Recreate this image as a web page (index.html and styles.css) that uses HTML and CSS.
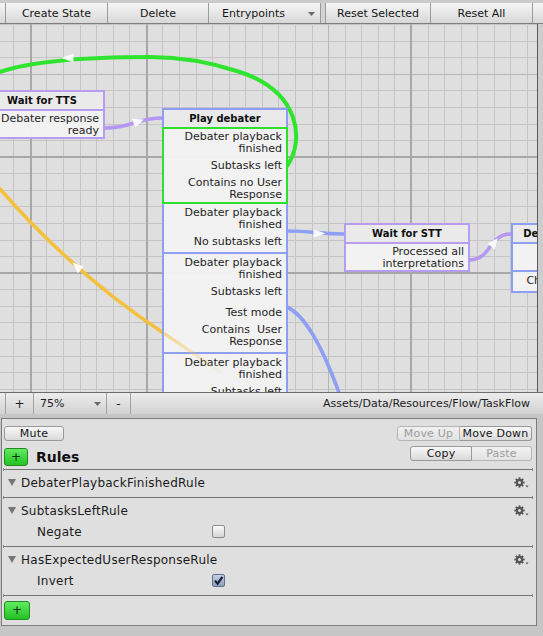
FILE: index.html
```html
<!DOCTYPE html>
<html>
<head>
<meta charset="utf-8">
<title>Flow Editor</title>
<link rel="stylesheet" href="styles.css">
</head>
<body>
<div class="window">
  <div class="toolbar">
    <div class="tb-item tb-lead"></div>
    <div class="tb-item tb-create">Create State</div>
    <div class="tb-item tb-delete">Delete</div>
    <div class="tb-item tb-drop"><span>Entrypoints</span><svg class="drop-arrow" width="7" height="4" viewBox="0 0 7 4"><polygon points="0,0 7,0 3.5,4" fill="#6a6a6a"/></svg></div>
    <div class="tb-item tb-gap"></div>
    <div class="tb-item tb-resetsel">Reset Selected</div>
    <div class="tb-item tb-resetall">Reset All</div>
    <div class="tb-item tb-fill"></div>
  </div>

  <div class="main">
    <div class="canvas">
      <svg class="layer" width="537" height="368" viewBox="0 0 537 368">
        <path class="g-minor" d="M13.5 0V368M30.5 0V368M46.5 0V368M63.5 0V368M80.5 0V368M96.5 0V368M113.5 0V368M129.5 0V368M146.5 0V368M162.5 0V368M179.5 0V368M196.5 0V368M212.5 0V368M229.5 0V368M245.5 0V368M262.5 0V368M278.5 0V368M295.5 0V368M312.5 0V368M328.5 0V368M345.5 0V368M361.5 0V368M378.5 0V368M394.5 0V368M411.5 0V368M428.5 0V368M444.5 0V368M461.5 0V368M477.5 0V368M494.5 0V368M510.5 0V368M527.5 0V368M0 0.5H537M0 17.5H537M0 33.5H537M0 50.5H537M0 66.5H537M0 83.5H537M0 100.5H537M0 116.5H537M0 133.5H537M0 149.5H537M0 166.5H537M0 182.5H537M0 199.5H537M0 216.5H537M0 232.5H537M0 249.5H537M0 265.5H537M0 282.5H537M0 298.5H537M0 315.5H537M0 332.5H537M0 348.5H537M0 365.5H537"/>
        <path class="g-mid" d="M328.5 0V368M0 50.5H537"/>
        <path class="g-major" d="M31 0V368M147 0V368M411 0V368M0 133H537M0 249H537"/>
      </svg>

      <svg class="layer" width="537" height="368" viewBox="0 24 537 368">
        <g fill="none" stroke-width="3.6" stroke-linecap="round">
          <path d="M-4,184.4 L0,189 Q75,275 165,334" stroke="#f4c13f"/>
          <path d="M287,166 C305,140 300,92 240,72 C210,62 180,57 150,57 C100,57 30,60 -6,74" stroke="#2fe42f" stroke-width="4"/>
          <path d="M105,128 C134,128 134,118 163,118" stroke="#b596f3"/>
          <path d="M287,231 C316,231 316,234 345,234" stroke="#8ea0f3"/>
          <path d="M469,260 C492,260 488,234 511,234" stroke="#b596f3"/>
          <path d="M287,307 C305,315 325,350 345,410" stroke="#8ea0f3"/>
        </g>
        <g class="arrows">
          <polygon points="61.5,58 73.5,53.5 73.5,62.5"/>
          <polygon points="144,119.5 132.1,118.9 135.1,127.4"/>
          <polygon points="325.5,233.5 313.5,229.2 313.5,237.6"/>
          <polygon points="498,238 494.5,249.4 487.5,243.6"/>
          <polygon points="72.5,262.5 83.8,266.5 77.8,273.2"/>
        </g>
      </svg>

      <div class="node node-tts purple">
        <div class="node-head">Wait for TTS</div>
        <div class="sec tight"><div class="cond">Debater response<br>ready</div></div>
      </div>

      <div class="node node-play">
        <div class="node-head">Play debater</div>
        <div class="sec active">
          <div class="cond">Debater playback<br>finished</div>
          <div class="cond">Subtasks left</div>
          <div class="cond">Contains no User<br>Response</div>
        </div>
        <div class="sec">
          <div class="cond">Debater playback<br>finished</div>
          <div class="cond">No subtasks left</div>
        </div>
        <div class="sec">
          <div class="cond">Debater playback<br>finished</div>
          <div class="cond">Subtasks left</div>
          <div class="cond gap-lg">Test mode</div>
          <div class="cond">Contains&nbsp; User<br>Response</div>
        </div>
        <div class="sec">
          <div class="cond">Debater playback<br>finished</div>
          <div class="cond">Subtasks left</div>
        </div>
      </div>

      <div class="node node-stt purple">
        <div class="node-head">Wait for STT</div>
        <div class="sec tight"><div class="cond">Processed all<br>interpretations</div></div>
      </div>

      <div class="node node-right">
        <div class="node-head">Debater follow-up</div>
        <div class="sec tight"><div class="cond">Answer matches<br>expected</div></div>
        <div class="sec"><div class="cond">Check user answer</div></div>
      </div>

      <svg class="layer" width="537" height="368" viewBox="0 24 537 368">
        <defs>
          <linearGradient id="fade" gradientUnits="userSpaceOnUse" x1="163" y1="333" x2="228" y2="377">
            <stop offset="0" stop-color="#f4c13f" stop-opacity="0.55"/>
            <stop offset="1" stop-color="#f4c13f" stop-opacity="0"/>
          </linearGradient>
        </defs>
        <path d="M164,333.3 Q195,354 228,377" fill="none" stroke="url(#fade)" stroke-width="3.4"/>
      </svg>
    </div>
    <div class="gutter"></div>
  </div>

  <div class="statusbar">
    <div class="sb-item sb-lead"></div>
    <div class="sb-item sb-plus">+</div>
    <div class="sb-item sb-zoom"><span>75%</span><svg width="7" height="4" viewBox="0 0 7 4"><polygon points="0,0 7,0 3.5,4" fill="#6a6a6a"/></svg></div>
    <div class="sb-item sb-minus">-</div>
    <div class="sb-item sb-path">Assets/Data/Resources/Flow/TaskFlow</div>
  </div>

  <div class="panel">
    <div class="prow">
      <div class="btn btn-mute">Mute</div>
      <div class="group">
        <div class="btn off w-up">Move Up</div>
        <div class="btn w-down">Move Down</div>
      </div>
    </div>
    <div class="prow prow2">
      <div class="rules-title">
        <div class="btn-add">+</div>
        <span class="rules-label">Rules</span>
      </div>
      <div class="group">
        <div class="btn w-copy">Copy</div>
        <div class="btn off w-paste">Paste</div>
      </div>
    </div>

    <div class="sep sep-first"></div>
    <div class="rule">
      <div class="rule-head">
        <svg class="tri" width="8" height="7" viewBox="0 0 8 7"><polygon points="0,0 8,0 4,7" fill="#767676"/></svg>
        <span>DebaterPlaybackFinishedRule</span>
        <svg class="gear" width="15" height="12" viewBox="0 0 15 12"><g fill="#575757"><circle cx="5.5" cy="5.5" r="3.7"/><rect x="4.6" y="0.3" width="1.8" height="10.4"/><rect x="4.6" y="0.3" width="1.8" height="10.4" transform="rotate(45 5.5 5.5)"/><rect x="4.6" y="0.3" width="1.8" height="10.4" transform="rotate(90 5.5 5.5)"/><rect x="4.6" y="0.3" width="1.8" height="10.4" transform="rotate(135 5.5 5.5)"/><polygon points="11.5,8.5 14.5,8.5 13,10.5"/></g><circle cx="5.5" cy="5.5" r="1.5" fill="#dfdfdf"/></svg>
      </div>
    </div>
    <div class="sep"></div>
    <div class="rule">
      <div class="rule-head">
        <svg class="tri" width="8" height="7" viewBox="0 0 8 7"><polygon points="0,0 8,0 4,7" fill="#767676"/></svg>
        <span>SubtasksLeftRule</span>
        <svg class="gear" width="15" height="12" viewBox="0 0 15 12"><g fill="#575757"><circle cx="5.5" cy="5.5" r="3.7"/><rect x="4.6" y="0.3" width="1.8" height="10.4"/><rect x="4.6" y="0.3" width="1.8" height="10.4" transform="rotate(45 5.5 5.5)"/><rect x="4.6" y="0.3" width="1.8" height="10.4" transform="rotate(90 5.5 5.5)"/><rect x="4.6" y="0.3" width="1.8" height="10.4" transform="rotate(135 5.5 5.5)"/><polygon points="11.5,8.5 14.5,8.5 13,10.5"/></g><circle cx="5.5" cy="5.5" r="1.5" fill="#dfdfdf"/></svg>
      </div>
      <div class="field">
        <span class="field-label">Negate</span>
        <div class="check"></div>
      </div>
    </div>
    <div class="sep"></div>
    <div class="rule">
      <div class="rule-head">
        <svg class="tri" width="8" height="7" viewBox="0 0 8 7"><polygon points="0,0 8,0 4,7" fill="#767676"/></svg>
        <span>HasExpectedUserResponseRule</span>
        <svg class="gear" width="15" height="12" viewBox="0 0 15 12"><g fill="#575757"><circle cx="5.5" cy="5.5" r="3.7"/><rect x="4.6" y="0.3" width="1.8" height="10.4"/><rect x="4.6" y="0.3" width="1.8" height="10.4" transform="rotate(45 5.5 5.5)"/><rect x="4.6" y="0.3" width="1.8" height="10.4" transform="rotate(90 5.5 5.5)"/><rect x="4.6" y="0.3" width="1.8" height="10.4" transform="rotate(135 5.5 5.5)"/><polygon points="11.5,8.5 14.5,8.5 13,10.5"/></g><circle cx="5.5" cy="5.5" r="1.5" fill="#dfdfdf"/></svg>
      </div>
      <div class="field">
        <span class="field-label">Invert</span>
        <div class="check on"><svg width="11" height="11" viewBox="0 0 11 11"><path d="M2 5.6 L4.6 8.6 L9.4 1.8" fill="none" stroke="#15203a" stroke-width="2.2"/></svg></div>
      </div>
    </div>
    <div class="sep"></div>
    <div class="btn-add bottom">+</div>
  </div>
</div>
</body>
</html>
```

FILE: styles.css
```css
* { box-sizing: border-box; }
html, body { margin: 0; padding: 0; }
body {
  width: 543px;
  height: 636px;
  overflow: hidden;
  background: #c6c6c6;
  font-family: "DejaVu Sans", "Liberation Sans", sans-serif;
  color: #1a1a1a;
}
.window { display: flex; flex-direction: column; width: 543px; height: 636px; }

/* top toolbar */
.toolbar {
  display: flex;
  flex: none;
  height: 24px;
  padding-top: 3px;
  background: #cbcbcb;
  border-bottom: 1px solid #7e7e7e;
}
.tb-item {
  height: 20px;
  padding-top: 1px;
  border-right: 1px solid #9b9b9b;
  background: linear-gradient(#f5f5f5, #d8d8d8);
  display: flex;
  align-items: center;
  justify-content: center;
  font-size: 11px;
  white-space: nowrap;
  color: #161616;
}
.tb-lead { width: 6px; }
.tb-create { width: 102px; }
.tb-delete { width: 101px; }
.tb-drop { width: 112px; justify-content: space-between; padding-left: 13px; padding-right: 5px; }
.tb-gap { width: 5px; background: #d3d3d3; }
.tb-resetsel { width: 105px; }
.tb-resetall { width: 102px; }
.tb-fill { flex: 1; border-right: none; }

/* canvas */
.main { display: flex; flex: none; height: 368px; }
.canvas {
  position: relative;
  width: 538px;
  height: 368px;
  overflow: hidden;
  border-right: 1px solid #5c5c5c;
  background: #dfdfdf;
}
.gutter { flex: 1; background: #cdcdcd; }
.layer { position: absolute; left: 0; top: 0; }
.g-minor { fill: none; stroke: #c5c5c5; stroke-width: 1; }
.g-mid { fill: none; stroke: #b6b6b6; stroke-width: 1; }
.g-major { fill: none; stroke: #a8a8a8; stroke-width: 2; }
.arrows polygon { fill: #ffffff; fill-opacity: 0.92; }

/* nodes */
.node {
  --nc: #8e9ef2;
  position: absolute;
  width: 126px;
  border: 2px solid var(--nc);
  background: rgba(243, 243, 243, 0.96);
  color: #1f1f1f;
}
.node.purple { --nc: #b59ef2; }
.node-head {
  height: 19px;
  border-bottom: 2px solid var(--nc);
  background: rgba(233, 233, 233, 0.97);
  text-align: center;
  font-size: 10px;
  font-weight: bold;
  line-height: 17px;
  white-space: nowrap;
  overflow: hidden;
  color: #0e0e0e;
}
.sec {
  padding: 3px 4px 4px;
  text-align: right;
  font-size: 11px;
  line-height: 12px;
  white-space: nowrap;
}
.sec + .sec { border-top: 2px solid var(--nc); }
.sec.tight { padding: 2px 4px 0; }
.sec.active { padding: 2px 4px 1px; outline: 2px solid #2ce02c; }
.cond + .cond { margin-top: 5px; }
.cond.gap-lg { margin-top: 9px; }

.node-tts { left: -21px; top: 66px; }
.node-play { left: 162px; top: 84px; }
.node-stt { left: 344px; top: 199px; }
.node-right { left: 511px; top: 199px; }

/* bottom status bar */
.statusbar {
  display: flex;
  flex: none;
  height: 22px;
  border-top: 1px solid #6d6d6d;
  background: linear-gradient(#ececec, #d2d2d2);
  font-size: 11px;
  color: #1c1c1c;
}
.sb-item {
  display: flex;
  align-items: center;
  height: 21px;
  border-right: 1px solid #a3a3a3;
  white-space: nowrap;
}
.sb-lead { width: 6px; }
.sb-plus { width: 28px; justify-content: center; font-size: 12px; }
.sb-zoom { width: 73px; justify-content: space-between; padding: 0 5px 0 6px; }
.sb-minus { width: 24px; justify-content: center; font-size: 12px; }
.sb-path { flex: 1; justify-content: flex-end; padding-right: 13px; border-right: none; }

/* inspector panel */
.panel {
  flex: none;
  display: flex;
  flex-direction: column;
  margin: 4px 0 0 1px;
  width: 536px;
  height: 208px;
  border: 1px solid #7c7c7c;
  background: #dfdfdf;
  padding: 7px 4px 0 2px;
}
.prow { display: flex; justify-content: space-between; align-items: flex-start; }
.prow2 { margin-top: 5px; }
.btn {
  height: 15px;
  border: 1px solid #999999;
  border-radius: 3px;
  background: linear-gradient(#f8f8f8, #d9d9d9);
  font-size: 11px;
  line-height: 13px;
  text-align: center;
  color: #151515;
  white-space: nowrap;
  letter-spacing: 0.2px;
}
.btn.off { color: #9c9c9c; background: linear-gradient(#f1f1f1, #e2e2e2); border-color: #b4b4b4; }
.btn-mute { width: 60px; }
.group { display: flex; }
.group .btn:first-child { border-top-right-radius: 0; border-bottom-right-radius: 0; }
.group .btn:last-child { border-top-left-radius: 0; border-bottom-left-radius: 0; border-left: none; }
.w-up { width: 63px; }
.w-down { width: 72px; }
.w-copy { width: 62px; }
.w-paste { width: 60px; }

.rules-title { display: flex; align-items: center; margin-top: 2px; }
.btn-add {
  width: 24px;
  height: 18px;
  border: 1px solid #1f8c1f;
  border-radius: 3px;
  background: linear-gradient(#62ea62, #22c222);
  font-size: 12px;
  line-height: 16px;
  text-align: center;
  color: #0c300c;
}
.btn-add.bottom { width: 26px; height: 19px; margin-top: 4px; line-height: 17px; }
.rules-label { margin-left: 8px; font-size: 14px; font-weight: bold; color: #111; }

.sep {
  flex: none;
  height: 3px;
  margin: 0 -1px;
  border-left: 1px solid #8a8a8a;
  border-right: 1px solid #8a8a8a;
  background: linear-gradient(#747474, #747474) center / 100% 1px no-repeat;
}
.sep-first { margin-top: 2px; }
.rule { padding: 2px 0 4px; }
.rule-head {
  display: flex;
  align-items: center;
  height: 19px;
  padding: 0 3px 0 4px;
  font-size: 12px;
  letter-spacing: 0.25px;
  white-space: nowrap;
}
.tri { margin-right: 5px; flex: none; }
.gear { margin-left: auto; flex: none; }
.field {
  display: flex;
  align-items: center;
  height: 19px;
  margin-top: 2px;
  padding-left: 33px;
  font-size: 12px;
  letter-spacing: 0.25px;
}
.field-label { width: 175px; }
.check {
  width: 13px;
  height: 13px;
  border: 1px solid #8d8d8d;
  border-radius: 2px;
  background: linear-gradient(#fbfbfb, #d4d4d4);
  display: flex;
  align-items: center;
  justify-content: center;
}
.check.on { border-color: #5f6f8f; background: linear-gradient(#c6d0e2, #8e9db9); }
```
